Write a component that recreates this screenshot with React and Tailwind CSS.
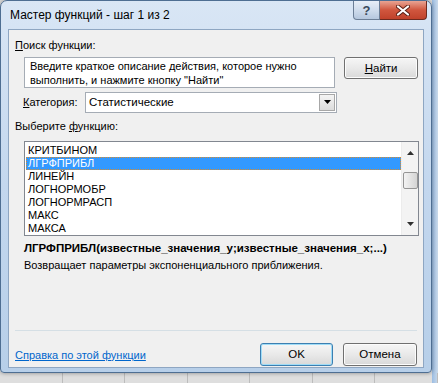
const items = [
  "КРИТБИНОМ",
  "ЛГРФПРИБЛ",
  "ЛИНЕЙН",
  "ЛОГНОРМОБР",
  "ЛОГНОРМРАСП",
  "МАКС",
  "МАКСА",
];

const font = { fontFamily: '"Liberation Sans", "Noto Sans", sans-serif' };

function Btn({ children, primary }) {
  return (
    <div
      className={
        "flex h-full items-center justify-center rounded-[3px] border bg-gradient-to-b from-[#f6f6f6] via-[#e9e9e9] to-[#d9d9d9] text-[11.5px] text-black " +
        (primary
          ? "border-[#3c7fb1] shadow-[inset_0_0_0_1px_#9fdcf7]"
          : "border-[#707070] shadow-[inset_0_0_0_1px_#fcfcfc]")
      }
    >
      {children}
    </div>
  );
}

export default function App() {
  return (
    <div
      className="relative w-[438px] h-[383px] overflow-hidden bg-[#dedede]"
      style={font}
    >
      {/* excel grid behind */}
      <div className="absolute right-0 top-0 w-[6px] h-full bg-gradient-to-r from-[#9bbde3] to-[#c9d9ea]" />
      <div className="absolute left-0 bottom-0 w-full h-[10px] flex">
        {[0, 1, 2, 3, 4, 5, 6].map((i) => (
          <div key={i} className="w-[64px] h-full border-r border-[#bcbcbc]" />
        ))}
      </div>

      {/* window */}
      <div className="relative flex flex-col w-[432px] h-[373px] rounded-t-[7px] rounded-b-[4px] border border-[#4e6e92] bg-gradient-to-b from-[#d9e6f5] via-[#c3d7ee] to-[#b7cfe9] shadow-[0_0_4px_rgba(0,0,0,0.4)]">
        <div className="flex h-[28px] items-start">
          <div className="pl-[9px] pt-[7px] text-[12px] text-black leading-[15px]">
            Мастер функций - шаг 1 из 2
          </div>
          <div className="ml-auto mr-[4px] flex h-[19px]">
            <div className="flex w-[27px] items-center justify-center rounded-bl-[4px] border border-[#6b7e96] border-t-0 bg-gradient-to-b from-[#e7eef7] via-[#cfdcec] to-[#b5c7de] text-[13px] font-bold leading-none text-[#3b4a5c]">
              ?
            </div>
            <div className="flex w-[47px] items-center justify-center rounded-br-[4px] border border-l-0 border-t-0 border-[#6d2a1f] bg-gradient-to-b from-[#e8a493] via-[#d0563e] to-[#c0422b]">
              <svg width="14" height="11" viewBox="0 0 14 11">
                <path
                  d="M2 1.5 L12 9.5 M12 1.5 L2 9.5"
                  stroke="#5a2016"
                  strokeWidth="4"
                  strokeLinecap="round"
                />
                <path
                  d="M2 1.5 L12 9.5 M12 1.5 L2 9.5"
                  stroke="#ffffff"
                  strokeWidth="2.2"
                  strokeLinecap="round"
                />
              </svg>
            </div>
          </div>
        </div>

        {/* client area */}
        <div className="mx-[7px] h-[339px] border border-[#8ea6c2] bg-[#f0f0f0] text-[11px] leading-[14px] text-black">
          <div className="pl-[6px] pt-[8px] h-[27px]">
            <span className="underline">П</span>оиск функции:
          </div>
          <div className="flex pl-[15px] pr-[5px]">
            <div className="w-[312px] h-[31px] border border-[#a5acb5] bg-white px-[5px] pt-[1px] leading-[14px]">
              Введите краткое описание действия, которое нужно
              <br />
              выполнить, и нажмите кнопку "Найти"
            </div>
            <div className="ml-[9px] w-[74px] h-[22px]">
              <Btn>
                <span className="leading-[20px]">
                  <span className="underline">Н</span>айти
                </span>
              </Btn>
            </div>
          </div>
          <div className="flex items-center mt-[3px] pl-[14px] h-[22px]">
            <div className="w-[62px]">
              <span className="underline">К</span>атегория:
            </div>
            <div className="flex w-[252px] h-[21px] border border-[#a5acb5] bg-white items-center">
              <div className="flex-1 pl-[3px] text-[11.5px]">Статистические</div>
              <div className="mr-[1px] flex w-[16px] h-[17px] items-center justify-center border border-[#a7a7a7] bg-gradient-to-b from-[#f4f4f4] to-[#dcdcdc]">
                <svg width="7" height="4" viewBox="0 0 7 4">
                  <path d="M0 0 H7 L3.5 4 Z" fill="#000" />
                </svg>
              </div>
            </div>
          </div>
          <div className="pl-[6px] pt-[6px] h-[28px]">
            Выберите <span className="underline">ф</span>ункцию:
          </div>
          <div className="ml-[15px] flex w-[395px] h-[95px] border border-[#828790] bg-white">
            <div className="flex-1 pt-[2px] pl-[1px]">
              {items.map((it, i) => (
                <div
                  key={it}
                  className={
                    "h-[13px] pl-[2px] leading-[13px] " +
                    (i === 1
                      ? "bg-[#3399ff] text-white outline-1 outline-dotted outline-[#d98b2b] -outline-offset-1"
                      : "")
                  }
                >
                  {it}
                </div>
              ))}
            </div>
            <div className="flex flex-col w-[17px] items-center bg-[#f3f3f3] border-l border-[#ececec]">
              <svg className="mt-[9px]" width="7" height="4" viewBox="0 0 7 4">
                <path d="M3.5 0 L7 4 H0 Z" fill="#303030" />
              </svg>
              <div className="mt-[17px] w-[15px] h-[17px] rounded-[2px] border border-[#959595] bg-gradient-to-r from-[#f3f3f3] to-[#d4d4d4]" />
              <svg className="mt-auto mb-[9px]" width="7" height="4" viewBox="0 0 7 4">
                <path d="M0 0 H7 L3.5 4 Z" fill="#303030" />
              </svg>
            </div>
          </div>
          <div className="pl-[15px] pt-[5px] text-[11.5px] font-bold whitespace-nowrap leading-[14px]">
            ЛГРФПРИБЛ(известные_значения_y;известные_значения_x;...)
          </div>
          <div className="pl-[15px] pt-[3px] whitespace-nowrap">
            Возвращает параметры экспоненциального приближения.
          </div>
          <div className="mx-[6px] mt-[58px] border-t border-[#d5dfe5]" />
          <div className="flex items-center mt-[12px] pl-[6px] pr-[6px]">
            <div className="text-[#0066cc] underline">Справка по этой функции</div>
            <div className="ml-auto w-[73px] h-[23px]">
              <Btn primary>
                <span className="leading-[21px]">OK</span>
              </Btn>
            </div>
            <div className="ml-[10px] w-[74px] h-[23px]">
              <Btn>
                <span className="leading-[21px]">Отмена</span>
              </Btn>
            </div>
          </div>
        </div>
      </div>
    </div>
  );
}
